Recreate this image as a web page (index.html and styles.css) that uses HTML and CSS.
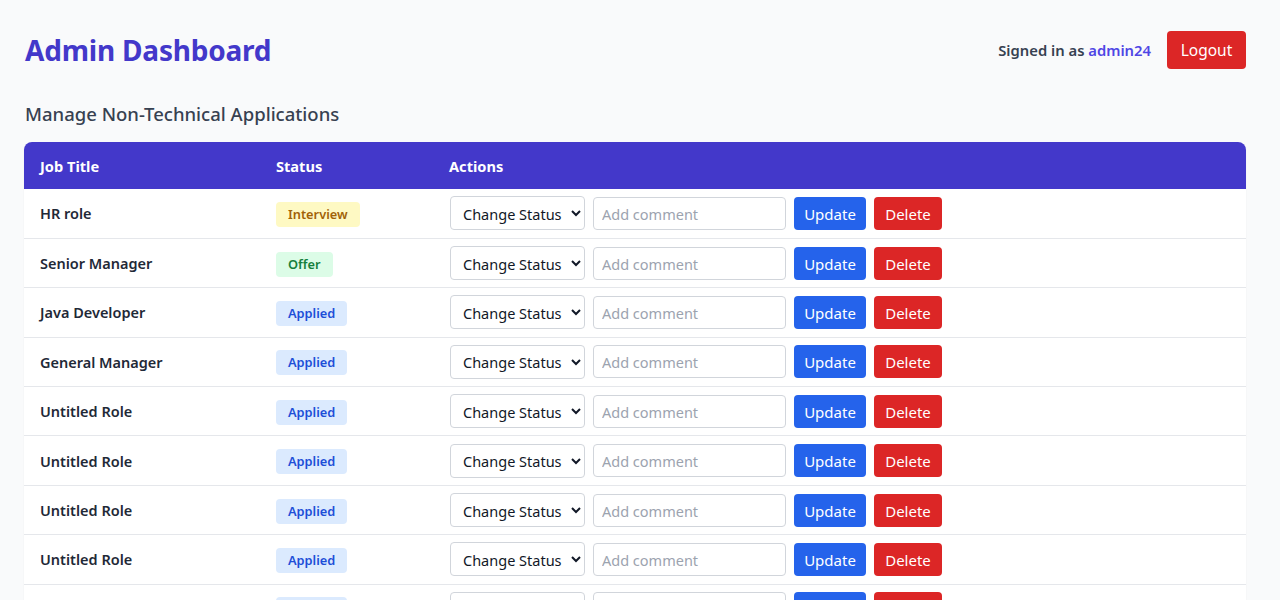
FILE: index.html
```html
<!DOCTYPE html>
<html lang="en">
<head>
<meta charset="utf-8">
<title>Admin Dashboard</title>
<link rel="stylesheet" href="styles.css">
</head>
<body>
<div class="page">
  <header class="topbar">
    <h1 class="title">Admin Dashboard</h1>
    <div class="user">
      <span class="signed">Signed in as <span class="username">admin24</span></span>
      <button class="btn btn-red btn-logout">Logout</button>
    </div>
  </header>
  <h2 class="subtitle">Manage Non-Technical Applications</h2>
  <div class="table-wrap">
    <table class="apps">
      <thead>
        <tr><th class="c1">Job Title</th><th class="c2">Status</th><th>Actions</th></tr>
      </thead>
      <tbody>
        <tr><td class="job">HR role</td><td><span class="badge b-yellow">Interview</span></td><td><div class="actions"><select class="sel"><option>Change Status</option></select><input class="comment" placeholder="Add comment"><button class="btn btn-blue">Update</button><button class="btn btn-red">Delete</button></div></td></tr>
        <tr><td class="job">Senior Manager</td><td><span class="badge b-green">Offer</span></td><td><div class="actions"><select class="sel"><option>Change Status</option></select><input class="comment" placeholder="Add comment"><button class="btn btn-blue">Update</button><button class="btn btn-red">Delete</button></div></td></tr>
        <tr><td class="job">Java Developer</td><td><span class="badge b-blue">Applied</span></td><td><div class="actions"><select class="sel"><option>Change Status</option></select><input class="comment" placeholder="Add comment"><button class="btn btn-blue">Update</button><button class="btn btn-red">Delete</button></div></td></tr>
        <tr><td class="job">General Manager</td><td><span class="badge b-blue">Applied</span></td><td><div class="actions"><select class="sel"><option>Change Status</option></select><input class="comment" placeholder="Add comment"><button class="btn btn-blue">Update</button><button class="btn btn-red">Delete</button></div></td></tr>
        <tr><td class="job">Untitled Role</td><td><span class="badge b-blue">Applied</span></td><td><div class="actions"><select class="sel"><option>Change Status</option></select><input class="comment" placeholder="Add comment"><button class="btn btn-blue">Update</button><button class="btn btn-red">Delete</button></div></td></tr>
        <tr><td class="job">Untitled Role</td><td><span class="badge b-blue">Applied</span></td><td><div class="actions"><select class="sel"><option>Change Status</option></select><input class="comment" placeholder="Add comment"><button class="btn btn-blue">Update</button><button class="btn btn-red">Delete</button></div></td></tr>
        <tr><td class="job">Untitled Role</td><td><span class="badge b-blue">Applied</span></td><td><div class="actions"><select class="sel"><option>Change Status</option></select><input class="comment" placeholder="Add comment"><button class="btn btn-blue">Update</button><button class="btn btn-red">Delete</button></div></td></tr>
        <tr><td class="job">Untitled Role</td><td><span class="badge b-blue">Applied</span></td><td><div class="actions"><select class="sel"><option>Change Status</option></select><input class="comment" placeholder="Add comment"><button class="btn btn-blue">Update</button><button class="btn btn-red">Delete</button></div></td></tr>
        <tr><td class="job">Untitled Role</td><td><span class="badge b-blue">Applied</span></td><td><div class="actions"><select class="sel"><option>Change Status</option></select><input class="comment" placeholder="Add comment"><button class="btn btn-blue">Update</button><button class="btn btn-red">Delete</button></div></td></tr>
        <tr><td class="job">Untitled Role</td><td><span class="badge b-blue">Applied</span></td><td><div class="actions"><select class="sel"><option>Change Status</option></select><input class="comment" placeholder="Add comment"><button class="btn btn-blue">Update</button><button class="btn btn-red">Delete</button></div></td></tr>
      </tbody>
    </table>
  </div>
</div>
</body>
</html>
```
FILE: styles.css
```css
* { box-sizing: border-box; }
html, body { margin: 0; padding: 0; }
body {
  background: #f9fafb;
  font-family: "Noto Sans", "Open Sans", sans-serif;
  color: #1f2937;
}
.page {
  padding: 24px 34px 24px 24px;
}
.topbar {
  display: flex;
  justify-content: space-between;
  align-items: center;
  height: 52px;
}
.title {
  margin: 0 0 0 1px;
  font-size: 28px;
  font-weight: 700;
  color: #4338ca;
  letter-spacing: -0.2px;
}
.user {
  display: flex;
  align-items: center;
  gap: 16px;
}
.signed {
  font-size: 14.8px;
  font-weight: 600;
  color: #374151;
}
.username { color: #4f46e5; }
.btn {
  font-family: inherit;
  border: 0;
  border-radius: 4px;
  color: #fff;
  font-size: 15px;
  cursor: pointer;
}
.btn-red { background: #dc2626; }
.btn-blue { background: #2563eb; }
.btn-logout {
  width: 79px;
  height: 38px;
  font-size: 15.5px;
  padding: 0;
}
.subtitle {
  margin: 24px 0 14px 1px;
  font-size: 18.5px;
  font-weight: 500;
  color: #374151;
  line-height: 28px;
}
.table-wrap {
  background: #fff;
  border-radius: 8px 8px 0 0;
  overflow: hidden;
  box-shadow: 0 1px 2px rgba(0,0,0,0.06);
}
.apps {
  width: 100%;
  border-collapse: collapse;
}
.apps th {
  background: #4338ca;
  color: #fff;
  text-align: left;
  font-size: 14.6px;
  font-weight: 700;
  height: 47px;
  padding: 0 16px;
}
.apps th.c1 { width: 236px; }
.apps th.c2 { width: 173px; }
.apps td {
  height: 49.4px;
  padding: 0 16px;
  border-bottom: 1px solid #e5e7eb;
  vertical-align: middle;
}
.job {
  font-size: 14.5px;
  font-weight: 600;
  color: #1f2937;
}
.badge {
  display: inline-block;
  font-size: 12.8px;
  font-weight: 600;
  padding: 3px 12px;
  border-radius: 4px;
  line-height: 19px;
  position: relative;
  top: 1px;
}
.b-yellow { background: #fef9c3; color: #a16207; }
.b-green { background: #dcfce7; color: #15803d; }
.b-blue { background: #dbeafe; color: #1d4ed8; }
.actions {
  display: flex;
  align-items: center;
  gap: 8px;
  margin-left: 1px;
}
.sel {
  width: 135px;
  height: 34px;
  border: 1px solid #d1d5db;
  border-radius: 4px;
  background: #fff;
  font-family: inherit;
  font-size: 14.5px;
  color: #111827;
  padding: 1px 6px 0 8px;
}
.comment {
  width: 193px;
  height: 33px;
  border: 1px solid #d1d5db;
  border-radius: 4px;
  font-family: inherit;
  font-size: 14.5px;
  padding: 1px 8px 0;
}
.comment::placeholder { color: #9ca3af; }
.actions .btn {
  height: 33px;
  padding: 1px 0 0;
}
.actions .btn-blue { width: 72px; }
.actions .btn-red { width: 68px; }
```
